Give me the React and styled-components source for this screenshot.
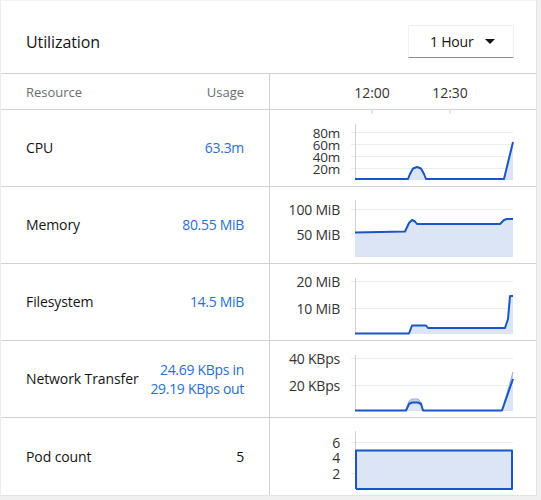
import React from 'react';
import styled, { createGlobalStyle } from 'styled-components';

const FONT = `'Open Sans', 'Noto Sans', sans-serif`;

const GlobalStyle = createGlobalStyle`
  body {
    margin: 0;
    background: #f0f0f0;
    font-family: ${FONT};
    color: #151515;
  }
`;

const Card = styled.div`
  width: 537px;
  height: 496px;
  background: #fff;
  border: 1px solid #e4e4e4;
  border-top-color: #f3f3f3;
  border-left-color: #ececec;
  box-sizing: border-box;
  display: flex;
  flex-direction: column;
  overflow: hidden;
`;

const CardHeader = styled.div`
  height: 73px;
  flex: none;
  display: flex;
  align-items: center;
  justify-content: space-between;
  padding: 9px 22px 0 25px;
  border-bottom: 1px solid #d2d2d2;
  box-sizing: border-box;
`;

const Title = styled.h2`
  margin: 0;
  font-size: 16px;
  font-weight: 400;
  letter-spacing: -0.1px;
`;

const Select = styled.div`
  width: 106px;
  height: 33px;
  box-sizing: border-box;
  border: 1px solid #f0f0f0;
  border-bottom-color: #8a8d90;
  display: flex;
  align-items: center;
  justify-content: space-between;
  padding: 0 18px 0 21px;
  font-size: 14px;
  letter-spacing: -0.2px;
`;

const Table = styled.div`
  display: grid;
  grid-template-columns: 269px 1fr;
  grid-template-rows: 36px repeat(5, 77px);
`;

const HeadCell = styled.div`
  border-bottom: 1px solid #d2d2d2;
  border-right: ${(p) => (p.$left ? '1px solid #d2d2d2' : 'none')};
  box-sizing: border-box;
  display: flex;
  align-items: center;
  justify-content: space-between;
  padding: 0 25px 0 25px;
  font-size: 13px;
  color: #6a6e73;
  position: relative;
`;

const TimeLabel = styled.span`
  position: absolute;
  top: 9px;
  font-size: 14px;
  color: #333;
  transform: translateX(-50%);
`;

const InfoCell = styled.div`
  border-bottom: ${(p) => (p.$last ? 'none' : '1px solid #d2d2d2')};
  border-right: 1px solid #d2d2d2;
  box-sizing: border-box;
  display: flex;
  align-items: center;
  justify-content: space-between;
  padding: 0 25px 1px 25px;
  font-size: 14px;
`;

const Label = styled.span`
  letter-spacing: -0.1px;
`;

const Value = styled.div`
  color: ${(p) => (p.$plain ? '#151515' : '#2b6ecf')};
  text-align: right;
  line-height: 19px;
  letter-spacing: -0.3px;
`;

const ChartCell = styled.div`
  border-bottom: ${(p) => (p.$last ? 'none' : '1px solid #d2d2d2')};
  box-sizing: border-box;
  svg {
    display: block;
  }
  text {
    font-family: ${FONT};
    font-size: ${(p) => (p.$dense ? '13.5px' : '14px')};
    letter-spacing: -0.2px;
    fill: #333;
  }
`;

const LINE = '#1a55c6';
const FILL = '#dbe5f6';

const Chart = ({ grid, axisTop, base, series, ticksTop }) => (
  <svg width="267" height="76" viewBox="1 0 267 76">
    {ticksTop && (
      <g stroke="#d2d2d2">
        <line x1="103" y1="0" x2="103" y2="4" />
        <line x1="181" y1="0" x2="181" y2="4" />
      </g>
    )}
    {grid.map(([label, y]) => (
      <g key={label}>
        <line x1="82" y1={y} x2="244" y2={y} stroke="#ececec" />
        <text x="71" y={y + 5} textAnchor="end">
          {label}
        </text>
      </g>
    ))}
    <line x1="86.5" y1={axisTop} x2="86.5" y2={base} stroke="#d2d2d2" />
    {series.map((s, i) => {
      const pts = s.points.map(([x, y]) => `${x},${y}`).join(' ');
      const area = `M86,${base} L${pts.split(' ').join(' L')} L244,${base} Z`;
      return (
        <g key={i}>
          <path d={area} fill={s.fill || FILL} />
          <polyline
            points={pts}
            fill="none"
            stroke={s.stroke || LINE}
            strokeWidth={s.width || 2}
            strokeLinejoin="round"
          />
        </g>
      );
    })}
  </svg>
);

const rows = [
  {
    name: 'CPU',
    value: '63.3m',
    dense: true,
    chart: {
      ticksTop: true,
      axisTop: 14,
      base: 70,
      grid: [
        ['80m', 22.5],
        ['60m', 34.5],
        ['40m', 46.5],
        ['20m', 58.5],
      ],
      series: [
        {
          points: [
            [86, 69], [139, 69], [141, 64], [144, 58.5], [148, 57], [152, 58.5],
            [155, 64], [157, 69], [235, 69], [244, 32],
          ],
        },
      ],
    },
  },
  {
    name: 'Memory',
    value: '80.55 MiB',
    chart: {
      axisTop: 13,
      base: 70,
      grid: [
        ['100 MiB', 22.5],
        ['50 MiB', 47.5],
      ],
      series: [
        {
          points: [
            [86, 45.5], [136, 44.5], [140, 36], [143, 33], [146, 34.5], [148, 37],
            [231, 37], [235, 33], [238, 32], [244, 32],
          ],
        },
      ],
    },
  },
  {
    name: 'Filesystem',
    value: '14.5 MiB',
    chart: {
      axisTop: 14,
      base: 70,
      grid: [
        ['20 MiB', 17.5],
        ['10 MiB', 44.5],
      ],
      series: [
        {
          points: [
            [86, 69.5], [140, 69.5], [143, 61.5], [157, 61.5], [159, 64], [236, 64],
            [239, 55], [241, 32], [244, 32],
          ],
        },
      ],
    },
  },
  {
    name: 'Network Transfer',
    value: ['24.69 KBps in', '29.19 KBps out'],
    chart: {
      axisTop: 14,
      base: 70,
      grid: [
        ['40 KBps', 17.5],
        ['20 KBps', 44.5],
      ],
      series: [
        {
          fill: '#c3d4f0',
          stroke: '#8fb0e6',
          width: 1,
          points: [
            [86, 69.5], [137, 69.5], [140, 60], [143, 58], [149, 58], [152, 61],
            [154, 69.5], [233, 69.5], [244, 31],
          ],
        },
        {
          points: [
            [86, 69.5], [137, 69.5], [140, 63], [143, 61.5], [149, 61.5], [152, 63],
            [154, 69.5], [233, 69.5], [244, 38],
          ],
        },
      ],
    },
  },
  {
    name: 'Pod count',
    value: '5',
    plain: true,
    chart: {
      axisTop: 13,
      base: 71,
      grid: [
        ['6', 24.5],
        ['4', 40],
        ['2', 55.5],
      ],
      series: [
        {
          points: [
            [87, 71], [87, 32.5], [243, 32.5], [243, 71], [87, 71],
          ],
        },
      ],
    },
  },
];

const Caret = () => (
  <svg width="10" height="6" viewBox="0 0 10 6">
    <path d="M0 0 L10 0 L5 5 Z" fill="#151515" />
  </svg>
);

export default function App() {
  return (
    <>
      <GlobalStyle />
      <Card>
        <CardHeader>
          <Title>Utilization</Title>
          <Select>
            <span>1 Hour</span>
            <Caret />
          </Select>
        </CardHeader>
        <Table>
          <HeadCell $left>
            <span>Resource</span>
            <span>Usage</span>
          </HeadCell>
          <HeadCell>
            <TimeLabel style={{ left: 102 }}>12:00</TimeLabel>
            <TimeLabel style={{ left: 180 }}>12:30</TimeLabel>
          </HeadCell>
          {rows.map((r, i) => {
            const last = i === rows.length - 1;
            return (
              <React.Fragment key={r.name}>
                <InfoCell $last={last}>
                  <Label>{r.name}</Label>
                  <Value $plain={r.plain}>
                    {Array.isArray(r.value)
                      ? r.value.map((v) => <div key={v}>{v}</div>)
                      : r.value}
                  </Value>
                </InfoCell>
                <ChartCell $last={last} $dense={r.dense}>
                  <Chart {...r.chart} />
                </ChartCell>
              </React.Fragment>
            );
          })}
        </Table>
      </Card>
    </>
  );
}
